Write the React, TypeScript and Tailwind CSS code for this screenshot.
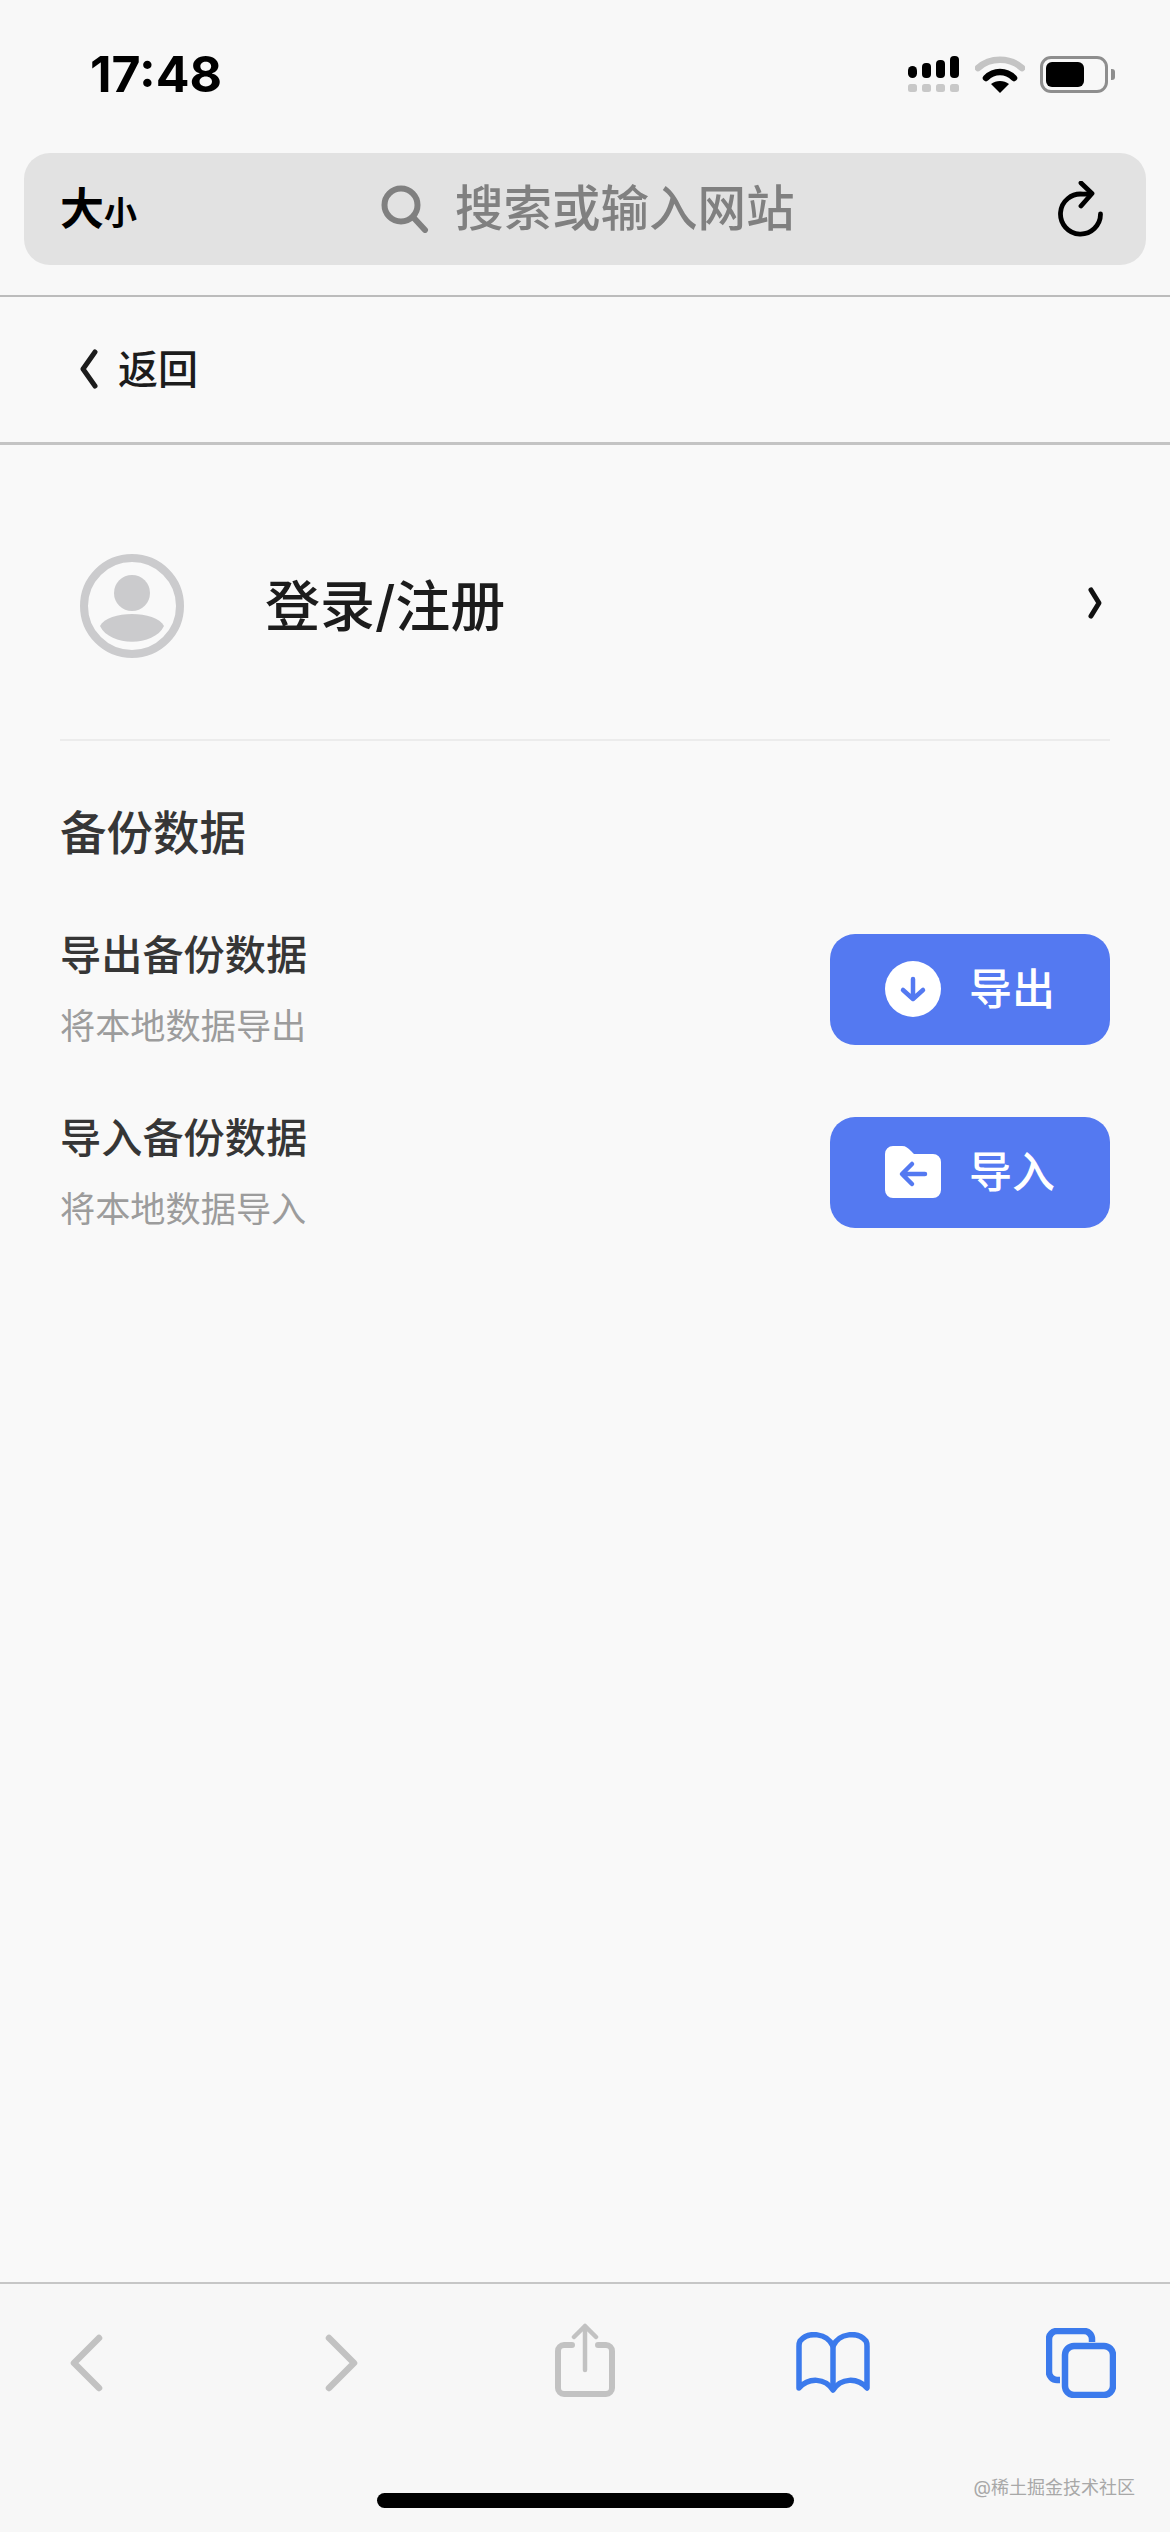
const cjk = "font-['Inter','Noto_Sans_CJK_SC',sans-serif]";

function StatusIcons() {
  return (
    <div className="flex items-start">
      <svg width="52" height="37" viewBox="0 0 52 37">
        <rect x="1" y="10" width="9" height="12" rx="4.5" fill="#000" />
        <rect x="15" y="7" width="9" height="15" rx="4" fill="#000" />
        <rect x="29" y="4" width="9" height="18" rx="4" fill="#000" />
        <rect x="43" y="0" width="9" height="22" rx="4" fill="#000" />
        <rect x="1" y="28" width="9" height="8" rx="2.5" fill="#c8c8c8" />
        <rect x="15" y="28" width="9" height="8" rx="2.5" fill="#c8c8c8" />
        <rect x="29" y="28" width="9" height="8" rx="2.5" fill="#c8c8c8" />
        <rect x="43" y="28" width="9" height="8" rx="2.5" fill="#c8c8c8" />
      </svg>
      <svg width="50" height="37" viewBox="0 0 50 37" className="ml-[16px]">
        <path d="M3 12C15 1 35 1 47 12" fill="none" stroke="#c4c4c4" strokeWidth="6.5" strokeLinecap="round" />
        <path d="M11 22C19 14 31 14 39 22" fill="none" stroke="#000" strokeWidth="6.5" strokeLinecap="round" />
        <path d="M16 28C21 24 29 24 34 28L25 37Z" fill="#000" />
      </svg>
      <div className="ml-[15px] flex items-center">
        <div className="flex h-[37px] w-[68px] items-center rounded-[11px] border-[3px] border-[#8e8e8e] px-[3px]">
          <div className="h-[25px] w-[38px] rounded-[6px] bg-black" />
        </div>
        <div className="ml-[3px] h-[11px] w-[4px] rounded-r-[3px] bg-[#8e8e8e]" />
      </div>
    </div>
  );
}

function Row({ title, sub, label, children }: { title: string; sub: string; label: string; children: React.ReactNode }) {
  return (
    <div className="flex items-center justify-between">
      <div className="flex flex-col pt-[1px]">
        <div className="text-[41.2px] leading-[42px] font-medium text-[#363636]">{title}</div>
        <div className="mt-[29px] text-[35.2px] leading-[42px] text-[#9c9c9c]">{sub}</div>
      </div>
      <button className="-mt-[2px] flex h-[111px] w-[280px] items-center rounded-[25px] bg-[#5479f1] pl-[55px] text-white">
        {children}
        <span className="ml-[28px] text-[43px] leading-none font-medium">{label}</span>
      </button>
    </div>
  );
}

export default function App() {
  return (
    <div className={`flex h-[2532px] w-[1170px] flex-col overflow-hidden bg-[#f9f9f9] ${cjk}`}>
      <div className="flex h-[153px] shrink-0 items-start justify-between bg-[#f8f8f8] pt-[56px] pr-[55px] pl-[90px]">
        <div className="text-[50px] leading-[37px] font-bold text-black">17:48</div>
        <StatusIcons />
      </div>

      <div className="-mt-px flex h-[113px] shrink-0 items-center bg-[#f8f8f8]">
        <div className="mx-[24px] flex h-[112px] flex-1 items-center rounded-[26px] bg-[#e2e2e2] pr-[42px] pl-[36px]">
          <div className="flex w-[84px] items-end font-bold text-black">
            <span className="text-[44px] leading-[46px]">大</span>
            <span className="text-[33px] leading-[38px] font-semibold">小</span>
          </div>
          <div className="ml-[237px] flex items-center pt-[1px]">
            <svg width="48" height="48" viewBox="0 0 48 48" fill="none" stroke="#808080" strokeWidth="6" strokeLinecap="round">
              <circle cx="20" cy="20" r="16.5" />
              <path d="M32 32L44 45" />
            </svg>
            <span className="ml-[26px] text-[48.5px] leading-none font-medium text-[#808080]">搜索或输入网站</span>
          </div>
          <svg width="46" height="56" viewBox="0 0 46 56" fill="none" stroke="#000" strokeWidth="4.8" strokeLinecap="round" strokeLinejoin="round" className="ml-auto">
            <path d="M42.5 33A20 20 0 1 1 25 13.2L33 13" />
            <path d="M23 2L34 12.5L23 25" />
          </svg>
        </div>
      </div>

      <div className="h-[30px] shrink-0 bg-[#f8f8f8]" />
      <div className="h-[2px] shrink-0 bg-[#bcbcbc]" />

      <div className="flex h-[145px] shrink-0 items-center pl-[78px] text-[#1c1c1c]">
        <svg width="22" height="40" viewBox="0 0 22 40" fill="none" stroke="#1c1c1c" strokeWidth="5" strokeLinecap="round" strokeLinejoin="round" className="-mt-[2px]">
          <path d="M17 3L5 20L17 37" />
        </svg>
        <span className="ml-[18px] text-[40px] leading-none font-medium">返回</span>
      </div>

      <div className="h-[3px] shrink-0 bg-[#c4c4c4]" />

      <div className="flex h-[296px] shrink-0 flex-col px-[60px]">
        <div className="flex flex-1 items-center pt-[28px]">
          <svg width="104" height="104" viewBox="0 0 104 104" className="ml-[20px] shrink-0">
            <circle cx="52" cy="52" r="48" fill="none" stroke="#cbcbcd" strokeWidth="8" />
            <circle cx="52" cy="39" r="18" fill="#cbcbcd" />
            <path d="M20 72C28 56 76 56 84 72C74 93 30 93 20 72Z" fill="#cbcbcd" />
          </svg>
          <div className="ml-[81px] text-[55px] leading-none font-medium text-[#1c1c1c]">登录/注册</div>
          <svg width="18" height="34" viewBox="0 0 18 34" fill="none" stroke="#111" strokeWidth="5" strokeLinecap="round" strokeLinejoin="round" className="mr-[6px] mb-[6px] ml-auto">
            <path d="M5 4L13 17L5 30" />
          </svg>
        </div>
        <div className="h-[2px] bg-[#ececec]" />
      </div>

      <div className="flex flex-col px-[60px]">
        <div className="mt-[67px] text-[46.5px] leading-[50px] font-medium text-[#363636]">备份数据</div>
        <div className="mt-[75px] flex flex-col gap-[69px]">
          <Row title="导出备份数据" sub="将本地数据导出" label="导出">
            <svg width="56" height="56" viewBox="0 0 56 56" className="shrink-0">
              <circle cx="28" cy="28" r="28" fill="#fff" />
              <path d="M28 18V37M18 29L28 38L38 29" fill="none" stroke="#5479f1" strokeWidth="4.5" strokeLinecap="round" strokeLinejoin="round" />
            </svg>
          </Row>
          <Row title="导入备份数据" sub="将本地数据导入" label="导入">
            <svg width="56" height="52" viewBox="0 0 56 52" className="shrink-0">
              <path d="M0 8a8 8 0 0 1 8-8h9c4 0 6 2 9 5l3 3h19a8 8 0 0 1 8 8v28a8 8 0 0 1-8 8H8a8 8 0 0 1-8-8Z" fill="#fff" />
              <path d="M40 28H18M27 18L17 28L27 38" fill="none" stroke="#5479f1" strokeWidth="4.5" strokeLinecap="round" strokeLinejoin="round" />
            </svg>
          </Row>
        </div>
      </div>

      <div className="relative mt-auto flex h-[250px] shrink-0 flex-col border-t-2 border-[#c6c6c6] bg-[#f7f7f7]">
        <div className="flex items-start pt-[39px]">
          <svg width="34" height="58" viewBox="0 0 34 58" fill="none" stroke="#c2c2c2" strokeWidth="6.5" strokeLinecap="round" strokeLinejoin="round" className="mt-[11px] ml-[69px]">
            <path d="M30 4L5 29L30 54" />
          </svg>
          <svg width="34" height="58" viewBox="0 0 34 58" fill="none" stroke="#c2c2c2" strokeWidth="6.5" strokeLinecap="round" strokeLinejoin="round" className="mt-[11px] ml-[222px]">
            <path d="M4 4L29 29L4 54" />
          </svg>
          <svg width="60" height="74" viewBox="0 0 60 74" fill="none" stroke="#c2c2c2" strokeLinecap="round" strokeLinejoin="round" className="ml-[196px]">
            <path d="M17 22H9a6 6 0 0 0-6 6v37a6 6 0 0 0 6 6h42a6 6 0 0 0 6-6V28a6 6 0 0 0-6-6h-8" strokeWidth="6" />
            <path d="M30 47V3M19 14L30 3L41 14" strokeWidth="4.5" />
          </svg>
          <svg width="74" height="62" viewBox="0 0 74 62" fill="none" stroke="#3b7aec" strokeWidth="5.5" strokeLinejoin="round" className="mt-[9px] ml-[181px]">
            <path d="M37 14C31 1 12 -1 4 9C3 11 3 12 3 14V56C13 45 29 46 37 58C45 46 61 45 71 56V14C71 12 71 11 70 9C62 -1 43 1 37 14Z" />
            <path d="M37 14V58" />
          </svg>
          <svg width="70" height="70" viewBox="0 0 70 70" fill="none" stroke="#3b7aec" strokeWidth="6.5" className="mt-[5px] ml-[176px]">
            <rect x="19" y="18" width="48" height="49" rx="9" />
            <path d="M14 52H11a8 8 0 0 1-8-8V11a8 8 0 0 1 8-8h27a8 8 0 0 1 8 8v3" />
          </svg>
        </div>
        <div className="absolute top-[192px] right-[35px] text-[18px] leading-[24px] text-[#a8a8a8]">@稀土掘金技术社区</div>
        <div className="absolute bottom-[24px] left-[377px] h-[15px] w-[417px] rounded-full bg-black" />
      </div>
    </div>
  );
}
